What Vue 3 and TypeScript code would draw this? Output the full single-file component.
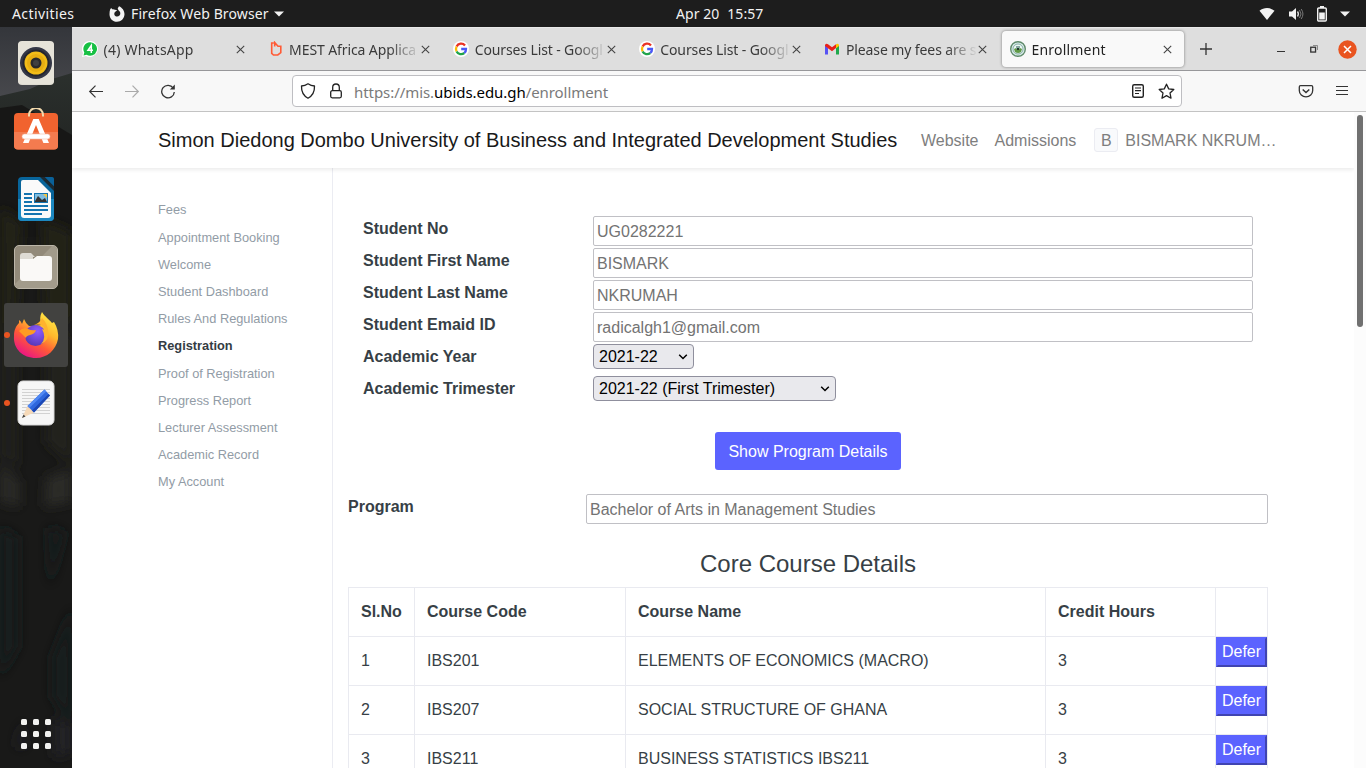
<script setup lang="ts">
interface Tab { title: string; icon: string; spacing: string; active?: boolean }
interface Field { label: string; value: string; kind: 'input' | 'year' | 'term' }
interface Course { no: number; code: string; name: string; hours: number }

const tabs: Tab[] = [
  { title: '(4) WhatsApp', icon: 'whatsapp', spacing: 't-wa' },
  { title: 'MEST Africa Applica', icon: 'mest', spacing: 't-mest' },
  { title: 'Courses List - Googl', icon: 'google', spacing: 't-goog' },
  { title: 'Courses List - Googl', icon: 'google', spacing: 't-goog' },
  { title: 'Please my fees are s', icon: 'gmail', spacing: 't-mail' },
  { title: 'Enrollment', icon: 'crest', spacing: 't-enr', active: true },
]

const menu: string[] = [
  'Fees', 'Appointment Booking', 'Welcome', 'Student Dashboard', 'Rules And Regulations', 'Registration',
  'Proof of Registration', 'Progress Report', 'Lecturer Assessment', 'Academic Record', 'My Account',
]

const fields: Field[] = [
  { label: 'Student No', value: 'UG0282221', kind: 'input' },
  { label: 'Student First Name', value: 'BISMARK', kind: 'input' },
  { label: 'Student Last Name', value: 'NKRUMAH', kind: 'input' },
  { label: 'Student Emaid ID', value: 'radicalgh1@gmail.com', kind: 'input' },
  { label: 'Academic Year', value: '2021-22', kind: 'year' },
  { label: 'Academic Trimester', value: '2021-22 (First Trimester)', kind: 'term' },
]

const courses: Course[] = [
  { no: 1, code: 'IBS201', name: 'ELEMENTS OF ECONOMICS (MACRO)', hours: 3 },
  { no: 2, code: 'IBS207', name: 'SOCIAL STRUCTURE OF GHANA', hours: 3 },
  { no: 3, code: 'IBS211', name: 'BUSINESS STATISTICS IBS211', hours: 3 },
]
</script>

<template>
  <div class="desktop">
    <header class="topbar">
      <div class="top-left">
        <span class="activities">Activities</span>
        <svg class="ff-mono" width="16" height="16" viewBox="0 0 16 16">
          <path fill="#f2f2f2" d="M1.2 3.2 2.2 2l1 1.3C4.2 3 5.2 3.2 6 3.8l2.2.5-1.6 1.3C5.2 6.500 5 8 5.600 9.200 6.500 10.700 9 11 10.500 9.500 12 7.800 11.500 5.500 9.500 4.200L8.700 2.500 10 .2C13 1.500 15.600 4.500 15.500 8.300 15.300 12.700 12 15.800 8 15.800 3.700 15.800.5 12.500.5 8.200.5 6.200.7 4.500 1.200 3.200Z" />
        </svg>
        <span class="appname">Firefox Web Browser</span>
        <svg class="caret" width="10" height="6" viewBox="0 0 10 6"><path d="M0 .5h10L5 5.500Z" fill="#f2f2f2" /></svg>
      </div>
      <div class="clock"><span>Apr 20</span><span>15:57</span></div>
      <div class="tray">
        <svg width="16" height="14" viewBox="0 0 16 14"><path d="M.5 3.800C4.800.2 11.200.2 15.500 3.800L8 13Z" fill="#f2f2f2" /></svg>
        <svg width="16" height="14" viewBox="0 0 16 14">
          <path d="M1 4.500h3L8 1v12L4 9.500H1Z" fill="#f2f2f2" />
          <path d="M9.500 4.500q1.800 2.500 0 5" fill="none" stroke="#ddd" stroke-width="1.300" />
          <path d="M11.500 3q3 4 0 8M13.200 2q3.500 5 0 10" fill="none" stroke="#777" stroke-width="1" />
        </svg>
        <svg width="10" height="16" viewBox="0 0 10 16">
          <path d="M3 0h4v2H3Z" fill="#f2f2f2" /><rect x=".7" y="2" width="8.600" height="13" rx="1" fill="none" stroke="#f2f2f2" stroke-width="1.400" /><path d="M2.200 6.500h5.600v7H2.200Z" fill="#f2f2f2" />
        </svg>
        <svg width="10" height="6" viewBox="0 0 10 6"><path d="M0 .5h10L5 5.500Z" fill="#f2f2f2" /></svg>
      </div>
    </header>

    <div class="workspace">
      <aside class="dock">
        <svg class="wall" width="72" height="741" viewBox="0 0 72 741">
          <defs>
            <linearGradient id="sky" x1="0" y1="0" x2="0" y2="1"><stop offset="0" stop-color="#34363b" /><stop offset="1" stop-color="#4a4b4f" /></linearGradient>
            <linearGradient id="hill" x1="0" y1="0" x2="0" y2="1"><stop offset="0" stop-color="#2b302d" /><stop offset="1" stop-color="#1c1d1c" /></linearGradient>
            <filter id="soft" x="-20%" y="-20%" width="140%" height="140%"><feGaussianBlur stdDeviation="6" /></filter>
          </defs>
          <rect width="72" height="741" fill="#191918" />
          <rect width="72" height="80" fill="url(#sky)" />
          <path d="M0 69 30 62 52 52 72 46V180H0Z" fill="url(#hill)" />
          <path d="M0 81 22 78 72 108V210H0Z" fill="#171716" />
          <g filter="url(#soft)">
            <path d="M0 180 22 196 16 300H0ZM42 192 72 205V300L44 280Z" fill="#232319" />
            <path d="M0 300 17 315V440L0 430ZM46 290 72 310V440L46 415Z" fill="#21211a" />
            <path d="M0 435 19 454V480L0 475ZM46 450 72 442V475L44 480Z" fill="#292928" />
            <path d="M0 500 18 510V620L0 650ZM48 500 65 505 50 560ZM72 580 52 630V670L72 700Z" fill="#181b1d" />
            <path d="M53 692 72 697V725L54 732ZM22 692 16 720 25 720Z" fill="#242427" />
          </g>
        </svg>
        <div class="slot">
          <svg width="44" height="46" viewBox="0 0 44 46">
            <rect x="4" y="2" width="36" height="43" rx="4" fill="#dedbd1" /><rect x="4" y="1" width="36" height="43" rx="4" fill="#e6e3d9" />
            <circle cx="22" cy="23" r="16" fill="#343746" /><circle cx="22" cy="23" r="13.500" fill="#24262f" />
            <circle cx="22" cy="23" r="11.500" fill="#f2bd19" /><circle cx="22" cy="23" r="9" fill="#e7ae12" /><circle cx="22" cy="23" r="5.500" fill="#29292b" /><circle cx="22" cy="23" r="3" fill="#404040" />
          </svg>
        </div>
        <div class="slot">
          <svg width="44" height="46" viewBox="0 0 44 46">
            <rect x="0" y="5" width="44" height="36.500" rx="4" fill="#f1632f" /><path d="M0 24h44v13.500q0 4-4 4H4q-4 0-4-4Z" fill="#f47b4f" />
            <path d="M15 8.500V7a7 7 0 0 1 14 0v1.500" fill="none" stroke="#f2d9ac" stroke-width="2" />
            <path d="M19.300 11h5.400L35 35h-5.600L22 17l-7.400 18H9Z" fill="#fff" /><rect x="8" y="26" width="28" height="5" rx="2.500" fill="#fff" stroke="#f4b9a2" stroke-width=".6" />
          </svg>
        </div>
        <div class="slot">
          <svg width="44" height="46" viewBox="0 0 44 46">
            <rect x="4" y="1" width="36" height="44" rx="4" fill="#08659b" /><path d="M4 23h36v18q0 4-4 4H8q-4 0-4-4Z" fill="#1c88c0" />
            <path d="M26 1h5l9 9v5Z" fill="#1b2a33" /><path d="M31 1h7q2 0 2 2v7Z" fill="#0a6199" />
            <path d="M9 4h15l13 13v22q0 3-3 3H10q-3 0-3-3V6q0-2 2-2Z" fill="#fafafa" />
            <path d="M10 18h8M10 22h8M10 26h8M10 30h24M10 34h24M10 38h18" stroke="#1474b0" stroke-width="2" />
            <rect x="20" y="17" width="14" height="10" fill="#1474b0" /><path d="M21 18h12v8H21Z" fill="#7fbde0" /><path d="m21 25 3-5 4 4 3-2 2 4H21Z" fill="#333" /><path d="M29 18h4v4Z" fill="#f4c542" />
          </svg>
        </div>
        <div class="slot">
          <svg width="44" height="46" viewBox="0 0 44 46">
            <rect x=".5" y="1.500" width="43" height="43" rx="4.500" fill="#928a7a" stroke="#bcb6a9" /><path d="M1 40 38 2h1q4 0 4 4v34q0 4-4 4H5q-4 0-4-4Z" fill="#a29b8b" />
            <path d="M6 12q0-3 3-3h8l4 4h-2v6H6Z" fill="#dedbd4" /><path d="M6 15h13l4-3h12q3 0 3 3v19q0 3-3 3H9q-3 0-3-3Z" fill="#faf9f7" />
          </svg>
        </div>
        <div class="slot current">
          <i class="dot"></i>
          <svg width="46" height="48" viewBox="0 0 46 48">
            <defs>
              <linearGradient id="fx" x1=".85" y1="0" x2=".25" y2="1"><stop offset="0" stop-color="#fff04a" /><stop offset=".38" stop-color="#ffb72c" /><stop offset=".65" stop-color="#ff5a36" /><stop offset="1" stop-color="#e9108a" /></linearGradient>
              <radialGradient id="orb" cx=".6" cy=".3" r=".8"><stop offset="0" stop-color="#8e5cff" /><stop offset="1" stop-color="#5134ae" /></radialGradient>
            </defs>
            <path d="M29 1C32 6 35 7 39 12l2-1q5 8 4 17C43 39 34 47 23 47 10 47 0 38 1 25 1 19 3 15 6 12V9q2 1 3 4l2-5q2 5 5 7l5 0 7-1q-2-8 1-13Z" fill="url(#fx)" />
            <circle cx="22.500" cy="24.500" r="10.500" fill="url(#orb)" />
            <path d="M6 20q4-4 9-2 4 2 8 1-1 4-6 5-4 1-4 3-3-3-7-7Z" fill="#ff9b22" />
            <path d="M21 14q9-2 11 5l-3-1q5 9-1 15 9-4 7-14-1-7-6-12-2 5-8 7Z" fill="#ffb32e" />
          </svg>
        </div>
        <div class="slot">
          <i class="dot"></i>
          <svg width="44" height="46" viewBox="0 0 44 46">
            <rect x="4" y="1" width="36" height="44" rx="5" fill="#f6f6f6" stroke="#dadada" />
            <path d="M8 9.500h28M8 12.500h28M8 15.500h28M8 18.500h28M8 21.500h28M8 24.500h28M8 27.500h28M8 30.500h28M8 33.500h28" stroke="#d2d2d2" />
            <path d="m8 38 5.500-12 6.500 6.500Z" fill="#f5d8b7" /><path d="m8 38 1.500-3.500 2 2Z" fill="#444" />
            <path d="m13.500 26 17-16.500 5.500 6-16 17Z" fill="#2e67dd" /><path d="m13.500 26 17-16.500 1.800 2-17 16.500Z" fill="#5088f3" /><path d="m18 30.500 16.500-16.500 1.500 1.500-16 17Z" fill="#1b47b5" />
          </svg>
        </div>
        <div class="apps"><i v-for="n in 9" :key="n"></i></div>
      </aside>

      <section class="browser">
        <div class="tabstrip">
          <div v-for="(tab, i) in tabs" :key="i" class="tab" :class="{ active: tab.active }">
            <svg v-if="tab.icon === 'whatsapp'" class="fav" viewBox="0 0 16 16"><path d="M8 0a8 8 0 1 1-4 15L0 16l1-4A8 8 0 0 1 8 0Z" fill="#fff" /><path d="M8 1.200a6.800 6.800 0 1 1-3.500 12.500L1.500 14.500l.8-3A6.800 6.800 0 0 1 8 1.200Z" fill="#17c044" /><path d="M9.300 12V4.500L6 9.300h5" fill="none" stroke="#fff" stroke-width="1.500" /></svg>
            <svg v-else-if="tab.icon === 'mest'" class="fav" viewBox="0 0 16 16"><path d="M5.800 2H3.700v10.300L5.500 14h4.300l3-2.300V5.300H10L6.700 1.500v4" fill="none" stroke="#ff5b36" stroke-width="1.600" /></svg>
            <svg v-else-if="tab.icon === 'google'" class="fav" viewBox="0 0 16 16"><circle cx="8" cy="8" r="8" fill="#fff" /><g fill="none" stroke-width="2.300"><path d="M12 4.500A5 5 0 0 0 3.600 5.600" stroke="#ea3223" /><path d="M3.600 5.600a5 5 0 0 0 0 4.800" stroke="#fbbc05" /><path d="M3.600 10.400A5 5 0 0 0 11.300 12" stroke="#20a34a" /><path d="M11.300 12A5 5 0 0 0 13 8H8.200" stroke="#4a58f5" /></g></svg>
            <svg v-else-if="tab.icon === 'gmail'" class="fav" viewBox="0 0 16 16"><path d="M1 4v9.500h3V7L1 4Z" fill="#5753f3" /><path d="M15 4v9.500h-3V7l3-3Z" fill="#20a94c" /><path d="M1 4.500V4q1-2.200 3-.8l4 3 4-3v3.900L8 10.300 1 5Z" fill="#e92018" /><path d="M12 3.200q2-1.400 3 .8v1L12 7.200Z" fill="#fbc600" /></svg>
            <svg v-else class="fav" viewBox="0 0 16 16"><circle cx="8" cy="8" r="7.300" fill="#d7ebe8" stroke="#608b6c" stroke-width="1.400" /><circle cx="8" cy="8" r="5" fill="#eef7f5" stroke="#709d94" stroke-width=".8" /><path d="M4 8q4-3 8 0l-1 3q-3 2-6 0Z" fill="#609a47" /><path d="M6 5h4v3H6Z" fill="#86a9a0" /><path d="M7 7h2v2H7Z" fill="#24362c" /></svg>
            <span class="tab-title" :class="tab.spacing">{{ tab.title }}</span>
            <svg class="close" width="9" height="9" viewBox="0 0 9 9"><path d="m.8.8 7.400 7.400m0-7.400L.8 8.200" stroke="#444" stroke-width="1.100" /></svg>
          </div>
          <svg class="newtab" width="12" height="12" viewBox="0 0 12 12"><path d="M6 0v12M0 6h12" stroke="#333" stroke-width="1.300" /></svg>
          <div class="wincontrols">
            <svg width="8" height="8" viewBox="0 0 8 8"><path d="M0 6.500h8" stroke="#333" /></svg>
            <svg width="8" height="8" viewBox="0 0 8 8"><rect x=".75" y="2.250" width="4.800" height="4.800" fill="none" stroke="#333" stroke-width="1.300" /><path d="M3 .5h4.500V5" fill="none" stroke="#777" stroke-width=".8" /></svg>
            <svg width="19" height="19" viewBox="0 0 19 19"><circle cx="9.500" cy="9.500" r="9.200" fill="#e95420" /><path d="m6 6 7 7m0-7-7 7" stroke="#fff" stroke-width="1.500" /></svg>
          </div>
        </div>

        <div class="toolbar">
          <div class="nav-icons">
            <svg width="16" height="16" viewBox="0 0 16 16"><path d="M15 8.500H1.700M7.500 2.700 1.700 8.500l5.800 5.800" fill="none" stroke="#333" stroke-width="1.200" /></svg>
            <svg width="16" height="16" viewBox="0 0 16 16"><path d="M1 8.500h13.300M8.500 2.700l5.800 5.800-5.800 5.800" fill="none" stroke="#aaa" stroke-width="1.200" /></svg>
            <svg width="16" height="16" viewBox="0 0 16 16"><path d="M13.200 5A6.300 6.300 0 1 0 14.300 9" fill="none" stroke="#333" stroke-width="1.300" /><path d="M14.800 1.500v5H9.800Z" fill="#333" /></svg>
          </div>
          <div class="urlbar">
            <svg width="16" height="16" viewBox="0 0 16 16"><path d="M8 .8q3 2 6.500 2.200C14.700 8.500 13 12.500 8 15.200 3 12.500 1.300 8.500 1.500 3 5 2.800 8 .8 8 .8Z" fill="none" stroke="#222" stroke-width="1.300" stroke-linejoin="round" /></svg>
            <svg width="16" height="16" viewBox="0 0 16 16"><rect x="2.700" y="7.700" width="10.600" height="7.100" rx="1.500" fill="none" stroke="#222" stroke-width="1.300" /><path d="M4.700 7.500V4.300a3.300 3.300 0 0 1 6.600 0v3.200" fill="none" stroke="#222" stroke-width="1.300" /></svg>
            <span class="url">https://mis.<b>ubids.edu.gh</b>/enrollment</span>
            <svg width="16" height="16" viewBox="0 0 16 16"><rect x="2.700" y="1.700" width="10.600" height="12.600" rx="1.500" fill="none" stroke="#222" stroke-width="1.400" /><path d="M5 5h6M5 7.700h6M5 10.500h4" stroke="#222" stroke-width="1.200" /></svg>
            <svg class="star" width="17" height="17" viewBox="0 0 17 17"><path d="m8.500 1.200 2.200 4.700 5.100.6-3.800 3.500 1 5.200-4.500-2.600L4 15.200 5 10 1.200 6.500l5.100-.6Z" fill="none" stroke="#222" stroke-width="1.300" stroke-linejoin="round" /></svg>
          </div>
          <div class="tool-right">
            <svg width="16" height="16" viewBox="0 0 16 16"><path d="M2.500 2.700h11q1.200 0 1.200 1.200v3.600a6.700 6.300 0 0 1-13.400 0V3.900q0-1.200 1.200-1.200Z" fill="none" stroke="#333" stroke-width="1.300" /><path d="m4.700 6.500 3.300 3 3.300-3" fill="none" stroke="#333" stroke-width="1.500" /></svg>
            <svg width="12" height="12" viewBox="0 0 12 12"><path d="M0 1.500h12M0 5.500h12M0 9.500h12" stroke="#333" stroke-width="1.100" /></svg>
          </div>
        </div>

        <div class="viewport">
          <div class="page">
            <nav class="navbar">
              <span class="brand">Simon Diedong Dombo University of Business and Integrated Development Studies</span>
              <a>Website</a><a>Admissions</a>
              <span class="user"><i class="avatar">B</i><span class="uname">BISMARK NKRUMAH</span></span>
            </nav>
            <div class="body">
              <ul class="side">
                <li v-for="item in menu" :key="item" :class="{ here: item === 'Registration' }">{{ item }}</li>
              </ul>
              <main class="content">
                <div class="form">
                  <div v-for="f in fields" :key="f.label" class="row">
                    <label>{{ f.label }}</label>
                    <div v-if="f.kind === 'input'" class="input">{{ f.value }}</div>
                    <div v-else class="select" :class="f.kind">
                      <span>{{ f.value }}</span>
                      <svg width="10" height="6" viewBox="0 0 10 6"><path d="m1.200.7 3.800 3.800L8.800.7" fill="none" stroke="#000" stroke-width="1.500" /></svg>
                    </div>
                  </div>
                </div>
                <div class="actions"><button class="primary">Show Program Details</button></div>
                <div class="program"><label>Program</label><div class="input">Bachelor of Arts in Management Studies</div></div>
                <h4>Core Course Details</h4>
                <table>
                  <colgroup><col class="c1"><col class="c2"><col class="c3"><col class="c4"><col class="c5"></colgroup>
                  <thead><tr><th>Sl.No</th><th>Course Code</th><th>Course Name</th><th>Credit Hours</th><th></th></tr></thead>
                  <tbody>
                    <tr v-for="c in courses" :key="c.no">
                      <td>{{ c.no }}</td><td>{{ c.code }}</td><td>{{ c.name }}</td><td>{{ c.hours }}</td>
                      <td class="act"><button class="defer">Defer</button></td>
                    </tr>
                  </tbody>
                </table>
              </main>
            </div>
          </div>
          <div class="scroll"><i></i></div>
        </div>
      </section>
    </div>
  </div>
</template>

<style>
html, body { margin: 0; overflow: hidden; }
</style>

<style scoped>
* { box-sizing: border-box; }
svg { display: block; flex: none; }
.desktop { width: 1366px; height: 768px; overflow: hidden; display: flex; flex-direction: column; font-family: "Liberation Sans", Arial, sans-serif; }
.topbar { height: 27px; flex: none; background: #1d1d1d; color: #f2f2f2; font: 14px/27px "Noto Sans", sans-serif; display: flex; align-items: center; white-space: nowrap; }
.top-left { display: flex; align-items: center; padding-left: 12px; width: 676px; flex: none; }
.activities { width: 97px; letter-spacing: 0.4px; }
.appname { width: 138px; margin-left: 6px; letter-spacing: 0.12px; }
.caret { margin-left: 5px; }
.clock { display: flex; gap: 8px; flex: none; letter-spacing: 0.05px; line-height: 25px; }
.tray { display: flex; align-items: center; margin-left: auto; gap: 13px; padding-right: 15px; position: relative; left: -1px; }
.workspace { display: flex; height: 741px; }
.dock { width: 72px; flex: none; position: relative; padding-top: 4px; display: flex; flex-direction: column; align-items: center; gap: 4px; overflow: hidden; }
.wall { position: absolute; left: 0; top: 0; }
.slot { width: 64px; height: 64px; flex: none; display: flex; align-items: center; justify-content: center; position: relative; border-radius: 3px; }
.slot.current { background: #424240; }
.dot { position: absolute; left: 0; top: 29px; width: 6px; height: 6px; border-radius: 50%; background: #e95420; }
.apps { position: relative; margin-top: auto; margin-bottom: 19px; display: grid; grid-template-columns: repeat(3, 6px); gap: 6px; }
.apps i { width: 6px; height: 6px; border-radius: 1.5px; background: #f2f2f0; }
.browser { flex: 1; min-width: 0; display: flex; flex-direction: column; }
.tabstrip { height: 44px; flex: none; background: #dedede; border-top: 1px solid #e9e9e9; border-bottom: 1px solid #97979a; display: flex; align-items: center; }
.tab { width: 181.600px; height: 36px; flex: none; margin: 0 2px; padding-left: 8px; display: flex; align-items: center; border-radius: 4px; }
.tab.active { background: #f9f9f9; box-shadow: 0 0 3px rgba(0, 0, 0, .45); }
.fav { width: 16px; height: 16px; }
.tab-title { width: 132px; margin-left: 5.500px; padding-top: 1px; white-space: nowrap; font: 14px/24px "Noto Sans", sans-serif; color: #3a3a3a; mask-image: linear-gradient(90deg, #000 100px, transparent 132px); }
.t-wa { letter-spacing: 0.22px; }
.t-mest { letter-spacing: -0.1px; }
.t-goog { letter-spacing: -0.12px; }
.t-mail { letter-spacing: -0.1px; }
.t-enr { letter-spacing: 0.2px; }
.tab.active .tab-title { color: #222; }
.newtab { margin-left: 14px; }
.wincontrols { margin-left: auto; padding-right: 9px; display: flex; align-items: center; gap: 25px; position: relative; left: 0; }
.wincontrols svg:last-child { margin-left: -5px; }
.toolbar { height: 41px; flex: none; background: #f8f8f8; border-bottom: 1px solid #c3c3c3; display: flex; align-items: center; }
.nav-icons { width: 220px; padding-left: 16px; display: flex; gap: 20px; }
.urlbar { width: 890px; height: 32px; background: #fff; border: 1px solid #bebec2; border-radius: 4px; display: flex; align-items: center; padding: 0 6px 0 7px; }
.urlbar svg + svg { margin-left: 12px; }
.url { flex: 1; margin-left: 10px; padding-top: 1px; font: 15px/28px "Noto Sans", sans-serif; letter-spacing: -0.06px; color: #7a7a7a; }
.url b { font-weight: 400; color: #000; }
.tool-right { margin-left: auto; padding-right: 18px; display: flex; align-items: center; gap: 22px; }
.viewport { flex: 1; min-height: 0; display: flex; background: #fff; }
.page { width: 1282px; display: flex; flex-direction: column; overflow: hidden; }
.navbar { height: 56px; flex: none; padding-left: 86px; display: flex; align-items: center; font-size: 16px; color: #7e7e7e; box-shadow: 0 2px 4px rgba(0, 0, 0, .08); position: relative; white-space: nowrap; }
.brand { font-size: 20px; color: #191919; width: 739px; margin-right: 24px; }
.navbar a { margin-right: 16px; padding-top: 2px; }
.user { display: flex; align-items: center; margin-left: 2px; }
.avatar { width: 24px; height: 24px; border: 1px solid #ebecf2; border-radius: 3px; background: #f9fafc; font-style: normal; line-height: 24px; text-align: center; margin-right: 7px; }
.uname { width: 152px; padding-top: 2px; overflow: hidden; text-overflow: ellipsis; }
.body { flex: 1; display: flex; min-height: 0; }
.side { width: 261px; flex: none; margin: 0; padding: 28.300px 0 0 86px; border-right: 1px solid #ebecf2; list-style: none; font-size: 12.800px; line-height: 19.200px; color: #929ca6; }
.side li { padding: 4px 0; }
.side .here { color: #343c43; font-weight: 700; }
.content { width: 950px; padding: 48px 15px 0; flex: none; color: #373f46; font-size: 16px; line-height: 24px; }
.form { padding: 0 15px; }
.row { display: flex; height: 32px; align-items: flex-start; }
label { width: 230px; flex: none; padding-top: 1px; font-weight: 700; }
.input { flex: 1; height: 30px; border: 1px solid #c0c0c5; border-radius: 2px; padding: 1px 3px 0; line-height: 28px; color: #737373; }
.select { height: 25px; border: 1px solid #8f8f9d; border-radius: 4px; background: #e9e9ed; color: #000; display: flex; justify-content: space-between; align-items: center; padding: 0 5px; line-height: 23px; }
.year { width: 101px; }
.term { width: 243px; }
.actions { display: flex; justify-content: center; margin-top: 24px; }
.primary { width: 186px; height: 38px; border: 0; border-radius: 3px; background: #5b63ff; color: #fff; font: 16px/24px "Liberation Sans", sans-serif; padding: 2px 0 0; }
.program { display: flex; margin-top: 24px; height: 30px; }
.program label { width: 238px; }
h4 { margin: 25px 0 9px; font-size: 24px; line-height: 29px; font-weight: 400; text-align: center; }
table { width: 920px; table-layout: fixed; border-collapse: collapse; }
.c1 { width: 66px; } .c2 { width: 211px; } .c3 { width: 420px; } .c4 { width: 170px; } .c5 { width: 52px; }
th, td { border: 1px solid #e9eaf0; padding: 12px; height: 49px; text-align: left; vertical-align: top; white-space: nowrap; }
td.act { padding: 0; }
.defer { display: block; width: 51px; height: 30px; padding: 0; border: 2px solid; border-color: #5b63ff #4044b1 #4044b1 #5b63ff; background: #5b63ff; color: #fff; font: 16px/24px "Liberation Sans", sans-serif; }
.scroll { width: 12px; background: #fcfcfc; padding: 3px 3px 0 3px; }
.scroll i { display: block; width: 6px; height: 212px; border-radius: 3px; background: #707070; }
</style>
